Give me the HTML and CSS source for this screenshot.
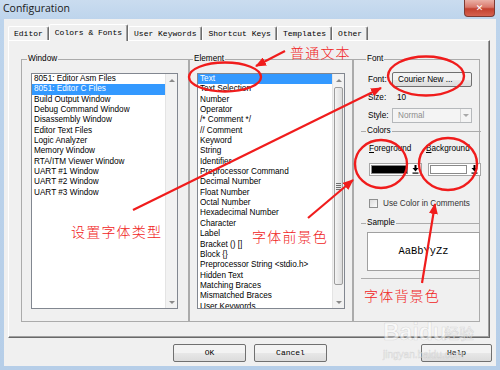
FILE: index.html
```html
<!DOCTYPE html>
<html lang="en">
<head>
    <meta charset="UTF-8">
    <meta name="viewport" content="width=device-width, initial-scale=1.0">
    <title>Configuration</title>
    <link rel="stylesheet" href="styles.css">
</head>
<body>
    <div class="window">
        <div class="titlebar">
            <span class="title">Configuration</span>
            <span class="close">✕</span>
        </div>

        <div class="client">
            <div class="tabs">
                <span class="tab">Editor</span>
                <span class="tab active">Colors &amp; Fonts</span>
                <span class="tab">User Keywords</span>
                <span class="tab">Shortcut Keys</span>
                <span class="tab">Templates</span>
                <span class="tab">Other</span>
            </div>

            <div class="panel">
                <div class="groups">
                    <fieldset class="group">
                        <legend>Window</legend>
                        <div class="listbox">
                            <ul class="items">
                                <li>8051: Editor Asm Files</li>
                                <li class="selected">8051: Editor C Files</li>
                                <li>Build Output Window</li>
                                <li>Debug Command Window</li>
                                <li>Disassembly Window</li>
                                <li>Editor Text Files</li>
                                <li>Logic Analyzer</li>
                                <li>Memory Window</li>
                                <li>RTA/ITM Viewer Window</li>
                                <li>UART #1 Window</li>
                                <li>UART #2 Window</li>
                                <li>UART #3 Window</li>
                            </ul>
                            <div class="scrollbar">
                                <span class="scroll-btn up"></span>
                                <span class="track"></span>
                                <span class="scroll-btn down"></span>
                            </div>
                        </div>
                    </fieldset>

                    <fieldset class="group">
                        <legend>Element</legend>
                        <div class="listbox">
                            <ul class="items">
                                <li class="selected">Text</li>
                                <li>Text Selection</li>
                                <li>Number</li>
                                <li>Operator</li>
                                <li>/* Comment */</li>
                                <li>// Comment</li>
                                <li>Keyword</li>
                                <li>String</li>
                                <li>Identifier</li>
                                <li>Preprocessor Command</li>
                                <li>Decimal Number</li>
                                <li>Float Number</li>
                                <li>Octal Number</li>
                                <li>Hexadecimal Number</li>
                                <li>Character</li>
                                <li>Label</li>
                                <li>Bracket () []</li>
                                <li>Block {}</li>
                                <li>Preprocessor String &lt;stdio.h&gt;</li>
                                <li>Hidden Text</li>
                                <li>Matching Braces</li>
                                <li>Mismatched Braces</li>
                                <li>User Keywords</li>
                            </ul>
                            <div class="scrollbar">
                                <span class="scroll-btn up"></span>
                                <span class="thumb"><span class="grip"></span></span>
                                <span class="track"></span>
                                <span class="scroll-btn down"></span>
                            </div>
                        </div>
                    </fieldset>

                    <fieldset class="group side">
                        <legend>Font</legend>
                        <div class="row font-row">
                            <span class="label">Font:</span>
                            <span class="button font-btn">Courier New ...</span>
                        </div>
                        <div class="row size-row">
                            <span class="label">Size:</span>
                            <span class="value">10</span>
                        </div>
                        <div class="row style-row">
                            <span class="label">Style:</span>
                            <span class="combo">Normal<span class="drop"></span></span>
                        </div>

                        <fieldset class="sub colors">
                            <legend>Colors</legend>
                            <div class="color-grid">
                                <div class="clabel"><u>F</u>oreground</div>
                                <div class="clabel"><u>B</u>ackground</div>
                                <div class="cpick">
                                    <span class="swatch black"></span>
                                    <span class="cbtn">
                                        <svg width="7" height="9" viewBox="0 0 7 9"><path d="M2.5 0h2v3h2L3.5 6.5 0.5 3h2z" fill="#000"/><rect x="0.5" y="7.5" width="6" height="1.2" fill="#000"/></svg>
                                    </span>
                                </div>
                                <div class="cpick">
                                    <span class="swatch"></span>
                                    <span class="cbtn">
                                        <svg width="7" height="9" viewBox="0 0 7 9"><path d="M2.5 0h2v3h2L3.5 6.5 0.5 3h2z" fill="#000"/><rect x="0.5" y="7.5" width="6" height="1.2" fill="#000"/></svg>
                                    </span>
                                </div>
                            </div>
                            <div class="check"><span class="box"></span>Use Color in Comments</div>
                        </fieldset>

                        <fieldset class="sub sample">
                            <legend>Sample</legend>
                            <div class="sample-box">AaBbYyZz</div>
                        </fieldset>
                    </fieldset>
                </div>
            </div>

            <div class="buttons">
                <span class="btn">OK</span>
                <span class="btn">Cancel</span>
                <span class="btn help">Help</span>
            </div>
        </div>

        <!-- red notes drawn over the screenshot -->
        <svg class="marks" width="500" height="370" viewBox="0 0 500 370">
            <defs>
                <marker id="head" markerUnits="userSpaceOnUse" markerWidth="11" markerHeight="9" refX="10" refY="4.5" orient="auto">
                    <path d="M0 0L11 4.5L0 9z" fill="#f01c1c"/>
                </marker>
            </defs>
            <g fill="none" stroke="#f01c1c" stroke-width="2.4">
                <ellipse cx="225" cy="77" rx="36" ry="14.5"/>
                <ellipse cx="426" cy="76" rx="38" ry="19.5"/>
                <ellipse cx="381" cy="164" rx="26" ry="24"/>
                <ellipse cx="448" cy="164" rx="29" ry="26"/>
            </g>
            <g stroke="#f01c1c" stroke-width="2.2" marker-end="url(#head)">
                <line x1="285" y1="51" x2="256" y2="66"/>
                <line x1="133" y1="210" x2="381" y2="88"/>
                <line x1="308" y1="218" x2="353" y2="180"/>
                <line x1="422" y1="283" x2="435" y2="204"/>
            </g>
            <g class="note">
                <text x="290" y="58">普通文本</text>
                <text x="71" y="237">设置字体类型</text>
                <text x="252" y="242">字体前景色</text>
                <text x="364" y="301">字体背景色</text>
            </g>
            <g class="stamp">
                <text class="stamp-big" x="383" y="340">Baidu</text>
                <text class="stamp-cn" x="444" y="339">经验</text>
                <text class="stamp-small" x="383" y="358">jingyan.baidu.com</text>
            </g>
        </svg>
    </div>
</body>
</html>
```

FILE: styles.css
```css
* {
    box-sizing: border-box;
}
body {
    margin: 0;
    width: 500px;
    height: 370px;
    overflow: hidden;
    font-family: 'Liberation Sans', Arial, sans-serif;
    font-size: 8.2px;
    color: #000;
}
.window {
    position: relative;
    width: 500px;
    height: 370px;
    display: flex;
    flex-direction: column;
    background: linear-gradient(#cadcef, #bdd4ec 20px, #b6cee8);
}

/* title bar */
.titlebar {
    height: 19px;
    display: flex;
    align-items: flex-start;
}
.title {
    padding-left: 3px;
    font-family: 'Open Sans', sans-serif;
    font-size: 10.5px;
    line-height: 16px;
    color: #1a1a1a;
}
.close {
    margin-left: auto;
    margin-right: 5px;
    width: 31px;
    height: 17px;
    border: 1px solid #7d3b33;
    border-top: 0;
    border-radius: 0 0 4px 4px;
    background: linear-gradient(#eab0a6, #d9786b 45%, #c3412f 55%, #d5614f);
    color: #fff;
    font: bold 9px/16px 'DejaVu Sans', sans-serif;
    text-align: center;
}

.client {
    flex: 1;
    margin: 0 4px 4px;
    padding-top: 5px;
    background: #f0f0f0;
}

/* tabs */
.tabs {
    display: flex;
    align-items: flex-end;
    height: 16px;
    padding-left: 4px;
}
.tab {
    height: 14px;
    padding: 0 5px;
    font-family: 'Liberation Mono', monospace;
    font-size: 8px;
    line-height: 13px;
    border: 1px solid;
    border-color: #fff #6d6d6d transparent #fff;
    border-bottom: 0;
    border-radius: 2px 2px 0 0;
    box-shadow: inset -1px 0 #a0a0a0;
}
.tab.active {
    position: relative;
    z-index: 1;
    height: 17px;
    margin-bottom: -1px;
    line-height: 15px;
    background: #f0f0f0;
}

.panel {
    width: 482px;
    height: 298px;
    margin-left: 4px;
    padding: 13px 0 0 12px;
    border: 1px solid;
    border-color: #fff #696969 #696969 #fff;
    box-shadow: inset -1px -1px #a0a0a0;
}
.groups {
    display: grid;
    grid-template-columns: 168px 164px 127px;
    height: 268px;
}
.group {
    margin: 0;
    min-width: 0;
    padding: 9px 10px 0 9px;
    border: 1px solid #ababab;
}
.group + .group {
    padding-left: 7px;
    padding-right: 7px;
}
legend {
    margin-left: -4px;
    padding: 0 1px;
    line-height: 10px;
}

/* list boxes */
.listbox {
    display: flex;
    height: 236px;
    border: 1px solid #828790;
    background: #fff;
}
.items {
    flex: 1;
    margin: 0;
    padding: 0;
    list-style: none;
    overflow: hidden;
}
.items li {
    height: 10.35px;
    line-height: 10.35px;
    padding-left: 2px;
    white-space: nowrap;
}
.items li.selected {
    background: #3399ff;
    color: #fff;
}
.scrollbar {
    width: 12px;
    display: flex;
    flex-direction: column;
    background: #f2f2f2;
    border-left: 1px solid #e4e4e4;
}
.scroll-btn {
    height: 12px;
    display: flex;
    align-items: center;
    justify-content: center;
}
.scroll-btn::before {
    content: "";
    border: 3px solid transparent;
}
.scroll-btn.up::before {
    border-top: 0;
    border-bottom-color: #8a8a8a;
}
.scroll-btn.down::before {
    border-bottom: 0;
    border-top-color: #8a8a8a;
}
.track {
    flex: 1;
}
.thumb {
    height: 198px;
    margin: 1px 1px 0;
    display: flex;
    align-items: center;
    justify-content: center;
    border: 1px solid #9d9d9d;
    border-radius: 2px;
    background: linear-gradient(to right, #f4f4f4, #dcdcdc);
}
.grip {
    width: 5px;
    height: 7px;
    background: repeating-linear-gradient(#6f6f6f 0 1px, transparent 1px 2px);
}

/* font / colours column */
.side {
    padding: 0;
}
.side legend {
    margin-left: 5px;
}
.row {
    display: flex;
    align-items: center;
    padding-left: 7px;
}
.label {
    width: 26px;
}
.font-row {
    margin-top: 8px;
    height: 15px;
}
.size-row {
    margin-top: 5px;
    height: 10px;
}
.value {
    padding-left: 3px;
}
.style-row {
    margin-top: 6px;
    height: 15px;
}
.button {
    display: flex;
    align-items: center;
    width: 86px;
    height: 15px;
    padding-left: 5px;
    border: 1px solid #707070;
    border-radius: 2px;
    background: linear-gradient(#f3f3f3 50%, #e8e8e8 50%, #dcdcdc);
}
.combo {
    display: flex;
    align-items: center;
    width: 86px;
    height: 15px;
    padding-left: 5px;
    border: 1px solid #b5b8bb;
    background: #f4f4f4;
    color: #8d8d8d;
}
.drop {
    margin-left: auto;
    width: 11px;
    height: 13px;
    display: flex;
    align-items: center;
    justify-content: center;
    border-left: 1px solid #d4d4d4;
}
.drop::before {
    content: "";
    border: 3px solid transparent;
    border-bottom: 0;
    border-top-color: #a8a8a8;
}
.sub {
    margin: 0;
    padding: 0;
    border: 0;
    border-top: 1px solid #ababab;
}
.colors {
    margin-top: 3px;
    padding-bottom: 10px;
}
.color-grid {
    display: grid;
    grid-template-columns: 53px 53px;
    column-gap: 6px;
    padding-left: 8px;
    margin-top: 8px;
}
.clabel {
    height: 10px;
    line-height: 10px;
}
.clabel + .clabel {
    margin-left: -2px;
}
.cpick {
    display: flex;
    height: 13px;
    margin-top: 9px;
    border: 1px solid #a5a5a5;
    background: #fff;
}
.swatch {
    flex: 1;
    margin: 1px;
    border: 1px solid #8a8a8a;
    background: #fff;
}
.swatch.black {
    background: #000;
}
.cbtn {
    width: 12px;
    display: flex;
    align-items: center;
    justify-content: center;
}
.check {
    display: flex;
    align-items: center;
    height: 10px;
    margin-top: 22px;
    padding-left: 8px;
    color: #333;
}
.box {
    width: 9px;
    height: 9px;
    margin-right: 5px;
    border: 1px solid #8e8f8f;
    background: linear-gradient(135deg, #dcdcdc, #fbfbfb);
}
.sample {
    padding-bottom: 7px;
    border-bottom: 1px solid #ababab;
}
.sample-box {
    width: 113px;
    height: 39px;
    margin: 4px 0 0 6px;
    border: 1px solid #a0a0a0;
    background: #fff;
    font-family: 'Liberation Mono', monospace;
    font-size: 10.4px;
    line-height: 37px;
    text-align: center;
}

/* dialog buttons */
.buttons {
    display: flex;
    gap: 8px;
    margin-top: 6px;
    padding: 0 4px 0 169px;
}
.btn {
    width: 73px;
    height: 18px;
    border: 1px solid #707070;
    border-radius: 2px;
    background: linear-gradient(#f3f3f3 50%, #e8e8e8 50%, #dcdcdc);
    font-family: 'Liberation Mono', monospace;
    font-size: 8px;
    line-height: 16px;
    text-align: center;
}
.btn.help {
    width: 71px;
    margin-left: auto;
}

/* annotation layer */
.marks {
    position: absolute;
    left: 0;
    top: 0;
    pointer-events: none;
}
.note text {
    fill: #f01c1c;
    font-family: 'Noto Sans CJK SC', sans-serif;
    font-size: 14px;
    font-weight: 300;
    letter-spacing: 1.2px;
}
.stamp text {
    fill: rgba(255, 255, 255, 0.6);
    stroke: rgba(150, 150, 150, 0.3);
    stroke-width: 0.6;
}
.stamp-big {
    font: bold 23px 'Liberation Sans', sans-serif;
}
.stamp-cn {
    font: 15px 'Noto Sans CJK SC', sans-serif;
}
.stamp-small {
    font: 10px 'Liberation Sans', sans-serif;
}
```
